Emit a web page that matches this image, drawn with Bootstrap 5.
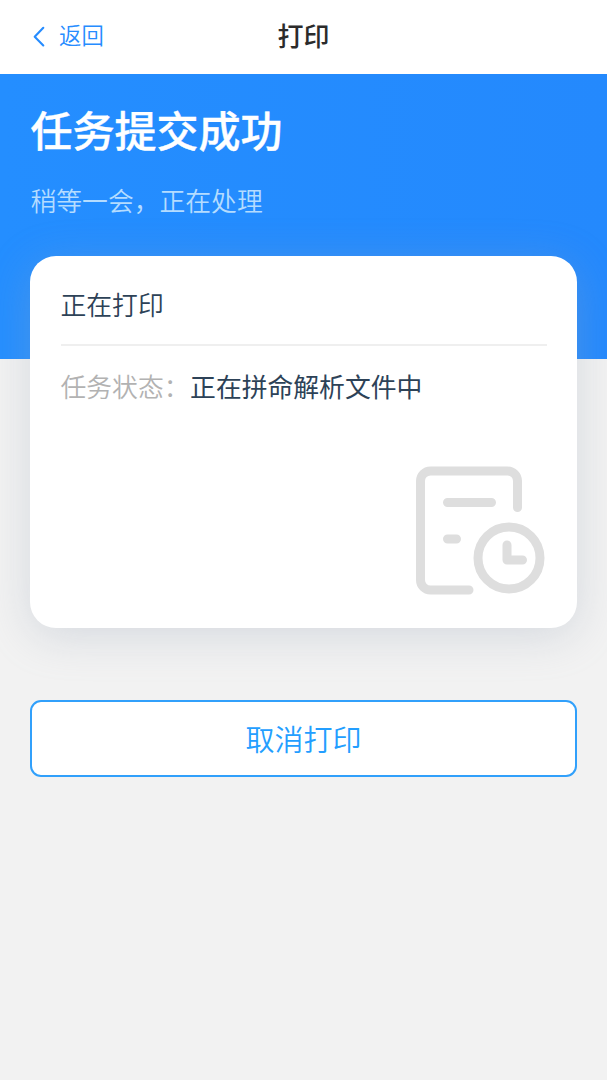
<!DOCTYPE html>
<html lang="zh-CN">
<head>
<meta charset="utf-8">
<meta name="viewport" content="width=device-width, initial-scale=1">
<title>打印</title>
<link href="https://cdn.jsdelivr.net/npm/bootstrap@5.3.0/dist/css/bootstrap.min.css" rel="stylesheet">
<style>
body{font-family:"Noto Sans CJK SC",sans-serif;background:#f2f2f2;min-height:100vh;line-height:1.5}
.topbar{height:74px;padding:0 30px 5px;background:#fff}
.back-link{color:#268cff;font-size:22.4px;gap:14px;margin-left:2px;line-height:34px;font-weight:350}
.back-link svg{margin-top:4px}
.bar-title{color:#2b2b2b;font-size:26px;font-weight:500;line-height:38px}
.hero{height:285px;padding:24px 30px 0 30.5px;background:linear-gradient(90deg,#248eff,#2489fd)}
.hero-title{font-size:42px;line-height:62px;font-weight:500;-webkit-text-stroke:.4px #fff}
.hero-sub{font-size:25.8px;line-height:38px;margin-top:21px;color:#b4dcff;font-weight:350}
.task-card{margin:-103.5px 30px 0;height:372px;padding:0 30.5px 31.5px;border:0;border-radius:26px;box-shadow:0 8px 44px rgba(152,166,182,.32);color:#2d4257;font-size:25.8px}
.task-head{height:90px;padding-top:9px;border-bottom:2px solid #efefef;font-weight:350}
.task-row{line-height:38px;margin-top:21px}
.task-label{color:#b2b2b2;font-weight:350;margin-right:.6px}
.task-icon{margin-right:1.5px}
.cancel-btn{margin:72.5px 30px 0;height:77px;border:2px solid #31a0fb;border-radius:11px;background:#fff;color:#239eff;font-size:29px;font-weight:350}
</style>
</head>
<body>
<header class="topbar row g-0 align-items-center">
  <div class="col"><a href="#" class="back-link d-inline-flex align-items-center text-decoration-none">
    <svg width="13" height="21" viewBox="0 0 13 21" fill="none" stroke="currentColor" stroke-width="2.1" stroke-linecap="round" stroke-linejoin="round"><path d="M11.3 1.800 2.700 10.800l8.600 8.600"/></svg>返回</a></div>
  <h1 class="bar-title col-auto m-0">打印</h1>
  <div class="col"></div>
</header>
<main class="d-flex flex-column">
  <section class="hero text-white">
    <h2 class="hero-title m-0">任务提交成功</h2>
    <p class="hero-sub mb-0">稍等一会，正在处理</p>
  </section>
  <section class="task-card card">
    <div class="task-head d-flex align-items-center">正在打印</div>
    <div class="task-row d-flex"><span class="task-label">任务状态：</span><span class="task-value">正在拼命解析文件中</span></div>
    <svg class="task-icon mt-auto ms-auto" width="130" height="130" viewBox="0 0 130 130" fill="none" stroke="#dedede" stroke-width="9" stroke-linecap="round" stroke-linejoin="round">
      <path d="M102.500 41.500V15a10 10 0 0 0-10-10h-77a10 10 0 0 0-10 10v99a10 10 0 0 0 10 10h38.500"/>
      <path d="M32.500 36.500h44M32.500 73h9M92 79v15h15.500"/>
      <circle cx="94" cy="92" r="31"/>
    </svg>
  </section>
  <button type="button" class="cancel-btn btn p-0">取消打印</button>
</main>
<script src="https://cdn.jsdelivr.net/npm/bootstrap@5.3.0/dist/js/bootstrap.bundle.min.js"></script>
</body>
</html>
